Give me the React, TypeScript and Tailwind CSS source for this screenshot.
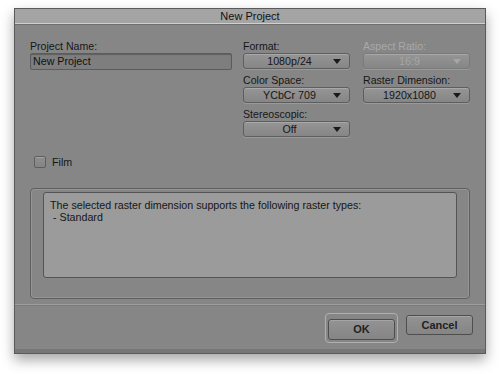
const font = { fontFamily: '"Liberation Sans", Arial, sans-serif' };

type DropProps = { value: string; disabled?: boolean };

const Dropdown = ({ value, disabled }: DropProps) => (
  <div
    className={`relative h-[16px] rounded-[3px] border border-[#5e5e5e] bg-gradient-to-b from-[#959595] to-[#868686] shadow-[inset_0_1px_0_#a8a8a8,0_1px_0_#9a9a9a] flex items-center justify-center pr-[14px] text-[10.7px] leading-none ${
      disabled ? "text-[#a6a6a6] border-[#7a7a7a]" : "text-[#161616]"
    }`}
  >
    <span>{value}</span>
    <svg
      className="absolute right-[8px] top-[5px]"
      width="8"
      height="5"
      viewBox="0 0 8 5"
    >
      <path d="M0 0 H8 L4 5 Z" fill={disabled ? "#a6a6a6" : "#1a1a1a"} />
    </svg>
  </div>
);

const Field = ({
  label,
  value,
  disabled,
}: {
  label: string;
  value: string;
  disabled?: boolean;
}) => (
  <div className="flex flex-col gap-[1px]">
    <span
      className={`h-[12px] text-[10.6px] leading-[12px] ${
        disabled ? "text-[#a9a9a9]" : "text-[#161616]"
      }`}
    >
      {label}
    </span>
    <Dropdown value={value} disabled={disabled} />
  </div>
);

const App = () => {
  return (
    <div className="w-[500px] h-[374px] bg-white pt-[8px] pl-[14px]" style={font}>
      {/* Dialog window */}
      <div className="w-[472px] h-[346px] bg-[#868686] border border-[#5a5a5a] shadow-[0_6px_12px_rgba(0,0,0,0.35)] flex flex-col">
        {/* Title bar */}
        <div className="h-[15px] bg-[#a4a4a4] border-b border-[#d0d0d0] shadow-[0_1px_0_#6e6e6e] flex items-center justify-center text-[11px] text-[#111]">
          New Project
        </div>

        <div className="flex-1 flex flex-col px-[15px] pt-[16px]">
          {/* Top fields */}
          <div className="flex">
            <div className="w-[202px] flex flex-col gap-[1px]">
              <span className="h-[12px] text-[10.6px] leading-[12px] text-[#161616]">
                Project Name:
              </span>
              <div className="h-[17px] rounded-[2px] border border-[#5c5c5c] bg-[#7e7e7e] shadow-[inset_0_1px_1px_rgba(0,0,0,0.25)] flex items-center px-[2px] text-[10.7px] text-[#111]">
                New Project
              </div>
            </div>
            <div className="w-[107px] ml-[11px] flex flex-col gap-[5px]">
              <Field label="Format:" value="1080p/24" />
              <Field label="Color Space:" value="YCbCr 709" />
              <Field label="Stereoscopic:" value="Off" />
            </div>
            <div className="w-[107px] ml-[13px] flex flex-col gap-[5px]">
              <Field label="Aspect Ratio:" value="16:9" disabled />
              <Field label="Raster Dimension:" value="1920x1080" />
            </div>
          </div>

          {/* Film checkbox */}
          <div className="flex items-center gap-[6px] mt-[17px] ml-[4px]">
            <div className="w-[12px] h-[12px] rounded-[2px] border border-[#5e5e5e] bg-gradient-to-b from-[#8e8e8e] to-[#848484] shadow-[inset_0_1px_0_#a0a0a0]" />
            <span className="text-[10.7px] text-[#161616]">Film</span>
          </div>

          {/* Info group box */}
          <div className="mt-[18px] w-[440px] h-[111px] rounded-[4px] border border-[#5f5f5f] shadow-[inset_0_0_0_1px_#959595] px-[12px] pt-[3px]">
            <div className="h-[86px] rounded-[3px] border border-[#545454] bg-[#9b9b9b] px-[6px] pt-[6px] text-[10.7px] leading-[12px] text-[#161616]">
              <p>The selected raster dimension supports the following raster types:</p>
              <p>&nbsp;- Standard</p>
            </div>
          </div>
        </div>

        {/* Bottom button bar */}
        <div className="h-[49px] border-t border-[#9e9e9e] shadow-[inset_0_1px_0_#7a7a7a] flex items-start justify-end gap-[8px] pr-[12px] pt-[8px] border-b-[4px] border-b-[#777]">
          <div className="rounded-[4px] border border-[#b0b0b0] p-[2px]">
            <button className="w-[67px] h-[21px] rounded-[3px] border border-[#4e4e4e] bg-gradient-to-b from-[#939393] to-[#858585] shadow-[inset_0_1px_0_#a5a5a5] text-[11px] font-bold text-[#222]">
              OK
            </button>
          </div>
          <button className="mt-[2px] w-[67px] h-[20px] rounded-[3px] border border-[#4e4e4e] bg-gradient-to-b from-[#939393] to-[#858585] shadow-[inset_0_1px_0_#a5a5a5] text-[11px] font-bold text-[#222]">
            Cancel
          </button>
        </div>
      </div>
    </div>
  );
};

export default App;
